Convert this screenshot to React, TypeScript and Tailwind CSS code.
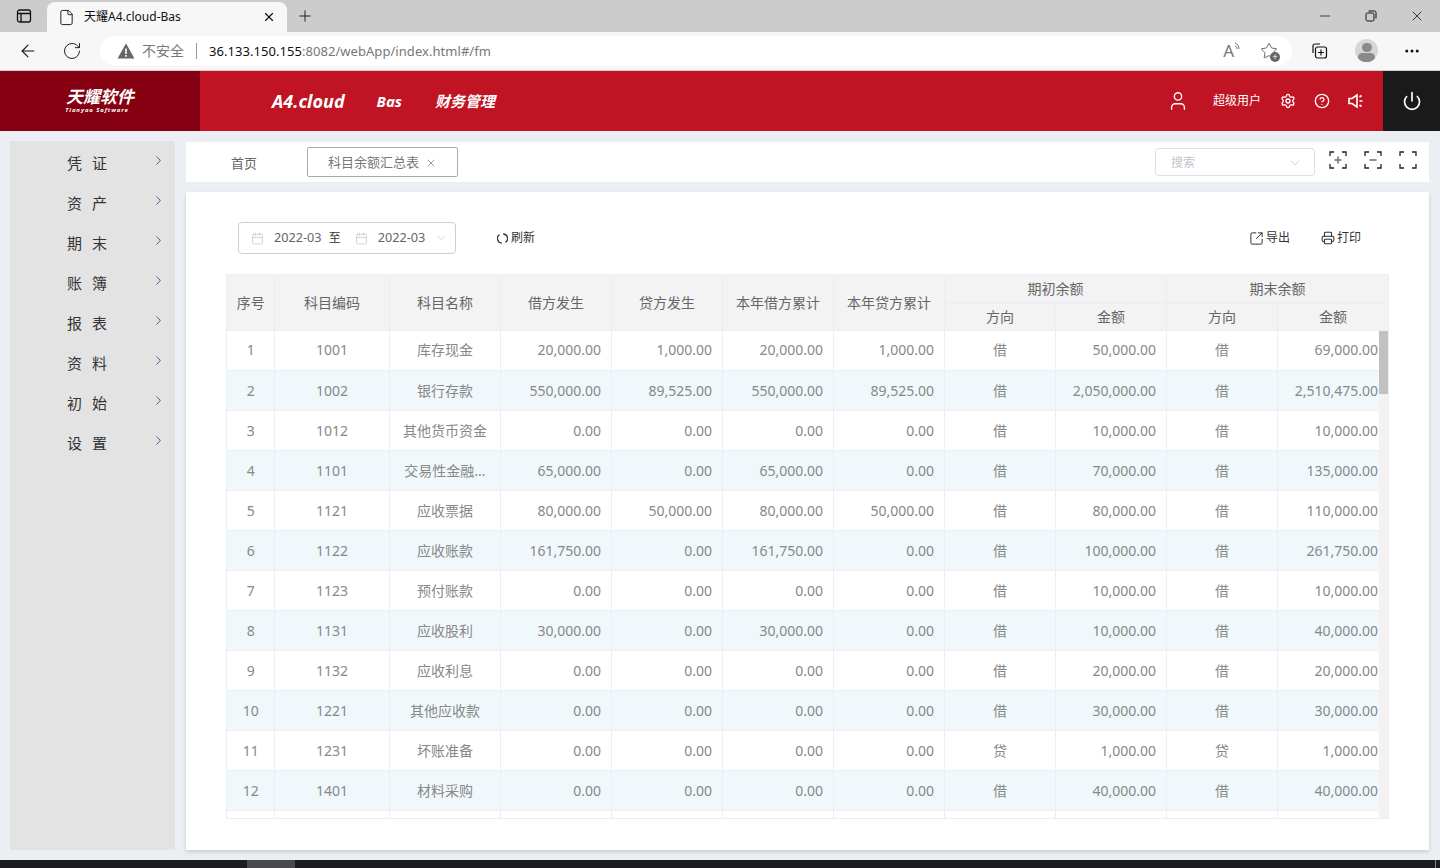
import React from 'react';
import {
  ArrowLeft, RotateCw, X, Plus, Minus, File, ChevronRight, ChevronDown, User, Settings,
  CircleHelp, Power, Calendar, SquareArrowOutUpRight, Printer, MoreHorizontal, Star,
} from 'lucide-react';

interface BalanceRow {
  no: number;
  code: string;
  name: string;
  debit: string;
  credit: string;
  yearDebit: string;
  yearCredit: string;
  openDir: string;
  open: string;
  closeDir: string;
  close: string;
}

const menus = ['凭证', '资产', '期末', '账簿', '报表', '资料', '初始', '设置'];

const row = (
  no: number, code: string, name: string, debit: string, credit: string,
  openDir: string, open: string, close: string,
): BalanceRow => ({
  no, code, name, debit, credit, yearDebit: debit, yearCredit: credit, openDir, open, closeDir: openDir, close,
});

const rows: BalanceRow[] = [
  row(1, '1001', '库存现金', '20,000.00', '1,000.00', '借', '50,000.00', '69,000.00'),
  row(2, '1002', '银行存款', '550,000.00', '89,525.00', '借', '2,050,000.00', '2,510,475.00'),
  row(3, '1012', '其他货币资金', '0.00', '0.00', '借', '10,000.00', '10,000.00'),
  row(4, '1101', '交易性金融...', '65,000.00', '0.00', '借', '70,000.00', '135,000.00'),
  row(5, '1121', '应收票据', '80,000.00', '50,000.00', '借', '80,000.00', '110,000.00'),
  row(6, '1122', '应收账款', '161,750.00', '0.00', '借', '100,000.00', '261,750.00'),
  row(7, '1123', '预付账款', '0.00', '0.00', '借', '10,000.00', '10,000.00'),
  row(8, '1131', '应收股利', '30,000.00', '0.00', '借', '10,000.00', '40,000.00'),
  row(9, '1132', '应收利息', '0.00', '0.00', '借', '20,000.00', '20,000.00'),
  row(10, '1221', '其他应收款', '0.00', '0.00', '借', '30,000.00', '30,000.00'),
  row(11, '1231', '坏账准备', '0.00', '0.00', '贷', '1,000.00', '1,000.00'),
  row(12, '1401', '材料采购', '0.00', '0.00', '借', '40,000.00', '40,000.00'),
];

const widths = [47, 115, 111, 111, 111, 111, 111, 111, 111, 111];

const Bracket = ({ mark }: { mark?: 'plus' | 'minus' }) => (
  <svg width="18" height="18" viewBox="0 0 18 18" fill="none" stroke="#222" strokeWidth="1.3">
    <path d="M1 5V1h4M13 1h4v4M17 13v4h-4M5 17H1v-4" />
    {mark && <path d="M5.5 9h7" stroke="#777" strokeWidth="1.6" />}
    {mark === 'plus' && <path d="M9 5.5v7" stroke="#777" strokeWidth="1.6" />}
  </svg>
);

const Th = ({ children, rowSpan, colSpan }: { children: React.ReactNode; rowSpan?: number; colSpan?: number }) => (
  <th rowSpan={rowSpan} colSpan={colSpan} className="border-r border-b border-[#ebeef5] bg-[#f3f3f3] text-center font-normal text-[14px] text-[#666] p-0 pl-[1px]">
    {children}
  </th>
);

const Td = ({ children, right, last }: { children?: React.ReactNode; right?: boolean; last?: boolean }) => (
  <td className={`h-[40px] border-b border-[#ebeef5] p-0 pb-[1px] text-[14px] text-[#888] whitespace-nowrap ${last ? '' : 'border-r'} ${right ? (last ? 'text-right pr-[1px]' : 'text-right pr-[9.5px]') : 'text-center pl-[1px]'}`}>
    {children}
  </td>
);

const BrowserChrome = () => (
  <div className="shrink-0">
    <div className="h-[32px] bg-[#cccccc] flex items-end text-[#111]">
      <div className="w-[47px] h-[32px] flex items-center justify-center">
        <svg width="16" height="16" viewBox="0 0 16 16" fill="none" stroke="#111" strokeWidth="1.3">
          <rect x="1.5" y="2" width="13" height="12" rx="2" />
          <path d="M1.5 5.5h13M5 5.5V14" />
        </svg>
      </div>
      <div className="w-[240px] h-[30px] bg-[#f7f7f7] rounded-t-lg flex items-center pl-[11px] pr-[11px]">
        <File size={17} strokeWidth={1.3} />
        <span className="ml-[9px] text-[12px] flex-1">天耀A4.cloud-Bas</span>
        <X size={14} />
      </div>
      <div className="h-[32px] ml-[9px] flex items-center">
        <Plus size={18} strokeWidth={1.2} />
      </div>
      <div className="ml-auto h-[32px] flex items-center">
        <Minus size={16} strokeWidth={1.1} className="mr-[32px]" />
        <svg width="12" height="12" viewBox="0 0 12 12" fill="none" stroke="#111" className="mr-[32px]">
          <rect x="1" y="3" width="8" height="8" rx="1.5" />
          <path d="M3.5 1h6a1.5 1.5 0 0 1 1.5 1.5v6" />
        </svg>
        <X size={16} strokeWidth={1.2} className="mr-[15px]" />
      </div>
    </div>
    <div className="h-[39px] bg-[#f7f7f7] border-b border-[#d0d0d0] flex items-center pb-[1px]">
      <ArrowLeft size={20} strokeWidth={1.3} className="ml-[18px] text-[#111]" />
      <RotateCw size={20} strokeWidth={1.2} className="ml-[24px] text-[#222]" />
      <div className="ml-[18px] w-[1192px] h-[30px] bg-white rounded-full flex items-center">
        <svg width="18" height="16" viewBox="0 0 18 16" className="ml-[17px]">
          <path d="M9 .5 17.5 15.5H.5z" fill="#666" />
          <path d="M8.2 5.5h1.6v5.5H8.2zM8.2 12h1.6v1.7H8.2z" fill="#fff" />
        </svg>
        <span className="ml-[7px] text-[14px] text-[#777]">不安全</span>
        <span className="ml-[12px] w-px h-[16px] bg-[#999]" />
        <span className="ml-[12px] pt-[2px] text-[13px] tracking-[0.05px] text-[#777] flex-1">
          <span className="text-[#111]">36.133.150.155</span>:8082/webApp/index.html#/fm
        </span>
        <span className="text-[17px] text-[#777]">A</span>
        <svg width="8" height="12" viewBox="0 0 8 12" fill="none" stroke="#777" strokeWidth="1" className="mr-[18px] -mt-[6px]">
          <path d="M1 1c2.500 1 4 3 4 6M1 4c1.500.5 2 1.500 2 3" />
        </svg>
        <div className="relative mr-[14px] text-[#555]">
          <Star size={18} strokeWidth={1.2} />
          <span className="absolute -right-[2px] -bottom-[2px] w-[10px] h-[10px] rounded-full bg-[#666] text-white text-[9px] leading-[10px] text-center">+</span>
        </div>
      </div>
      <svg width="18" height="18" viewBox="0 0 18 18" fill="none" stroke="#111" strokeWidth="1.2" className="ml-[18px]">
        <path d="M3 11V4a2 2 0 0 1 2-2h5" />
        <rect x="5.500" y="5" width="11" height="11" rx="2" />
        <path d="M11 7.500v6M8 10.500h6" />
      </svg>
      <div className="ml-[27px] w-[23px] h-[23px] rounded-full bg-[#d6d6d6] overflow-hidden flex flex-col items-center">
        <span className="mt-[4px] w-[10px] h-[10px] rounded-full bg-[#8a8a8a]" />
        <span className="mt-[1px] w-[17px] h-[10px] rounded-full bg-[#8a8a8a]" />
      </div>
      <MoreHorizontal size={18} strokeWidth={2} className="ml-[25px] text-[#111]" />
    </div>
  </div>
);

const AppHeader = () => (
  <div className="h-[60px] shrink-0 bg-[#c01323] flex items-center text-white">
    <div className="w-[200px] h-full bg-[#850010] flex flex-col items-center pt-[17px] pr-[0px]">
      <span className="text-[17px] leading-[18px] font-bold italic">天耀软件</span>
      <span className="mt-[1px] text-[6px] leading-[6px] italic font-bold tracking-[0.9px] -ml-[6px]">Tianyao Software</span>
    </div>
    <span className="ml-[72px] text-[18px] font-bold italic">A4.cloud</span>
    <span className="ml-[32px] text-[15px] font-bold italic">Bas</span>
    <span className="ml-[33px] text-[15px] font-bold italic">财务管理</span>
    <User size={22} strokeWidth={1.5} className="ml-auto" />
    <span className="ml-[24px] text-[12px]">超级用户</span>
    <Settings size={16} strokeWidth={2} className="ml-[19px]" />
    <CircleHelp size={16} strokeWidth={2} className="ml-[18px]" />
    <svg width="16" height="16" viewBox="0 0 16 16" fill="none" stroke="#fff" strokeWidth="1.6" className="ml-[18px] mr-[19px]">
      <path d="M1 5.500h3L9 2v12l-5-3.500H1zM11.500 4l2-1.500M11.500 8h3M11.500 12l2 1.500" />
    </svg>
    <div className="w-[57px] h-full bg-[#1a1a1a] flex items-center justify-center">
      <Power size={20} strokeWidth={2} />
    </div>
  </div>
);

const Sidebar = () => (
  <div className="w-[165px] ml-[10px] mt-[10px] mb-[10px] bg-[#e3e3e3] pt-[2px] shrink-0">
    {menus.map((m) => (
      <div key={m} className="h-[40px] flex items-center relative pl-[57px] text-[15px] text-[#333]">
        <span className="tracking-[10px]">{m}</span>
        <ChevronRight size={15} strokeWidth={1.4} className="absolute left-[141px] top-[10px] text-[#2f4f80]" />
      </div>
    ))}
  </div>
);

const TabsBar = () => (
  <div className="h-[40px] mt-[11px] bg-white flex items-center shrink-0">
    <span className="ml-[45px] pt-[3px] text-[13px] text-[#666]">首页</span>
    <div className="ml-[50px] w-[151px] h-[30px] pt-[2px] border border-[#aaa] rounded-[2px] flex items-center pl-[20px] text-[13px] text-[#777]">
      科目余额汇总表
      <X size={12} strokeWidth={1.4} className="ml-[6px] text-[#5a7a9a]" />
    </div>
    <div className="ml-auto w-[160px] h-[28px] pt-[1px] border border-[#dcdfe6] rounded-[4px] flex items-center px-[15px] text-[12px] text-[#c0c4cc]">
      <span className="flex-1">搜索</span>
      <ChevronDown size={16} strokeWidth={1.1} className="-mr-[4px]" />
    </div>
    <div className="flex items-center gap-[17px] ml-[14px] mr-[12px] -translate-y-[2px]">
      <Bracket mark="plus" />
      <Bracket mark="minus" />
      <Bracket />
    </div>
  </div>
);

const Toolbar = () => (
  <div className="flex items-center h-[32px] mt-[30px] ml-[52px] text-[12px] text-[#333]">
    <div className="w-[218px] h-[32px] border border-[#cfcfcf] rounded-[4px] flex items-center text-[12.7px] text-[#666]">
      <Calendar size={13} strokeWidth={1.1} className="ml-[12px] text-[#b0b8c8]" />
      <span className="ml-[10px]">2022-03</span>
      <span className="ml-[7px] text-[12px] text-[#333]">至</span>
      <Calendar size={13} strokeWidth={1.1} className="ml-[14px] text-[#b0b8c8]" />
      <span className="ml-[10px]">2022-03</span>
      <ChevronDown size={14} strokeWidth={1.1} className="ml-[9px] text-[#c0c4cc]" />
    </div>
    <svg width="11" height="11" viewBox="0 0 11 11" fill="none" stroke="#333" strokeWidth="1.3" className="ml-[41px]">
      <path d="M6.200 1A4.500 4.500 0 0 1 8.500 9.300M4.800 10A4.500 4.500 0 0 1 2.500 1.700" />
    </svg>
    <span className="ml-[3px]">刷新</span>
    <SquareArrowOutUpRight size={15} strokeWidth={1.6} className="ml-auto" />
    <span className="ml-[2px]">导出</span>
    <Printer size={14} strokeWidth={1.8} className="ml-[31px]" />
    <span className="ml-[2px] mr-[68px]">打印</span>
  </div>
);

const BalanceTable = () => (
  <div className="ml-[40px] mt-[20px] w-[1163px] h-[545px] border border-[#ebeef5] overflow-hidden">
    <table className="table-fixed border-collapse w-[1161px]">
      <colgroup>
        {widths.map((w, i) => <col key={i} className={w === 47 ? 'w-[47px]' : w === 115 ? 'w-[115px]' : 'w-[111px]'} />)}
        <col className="w-[111px]" />
      </colgroup>
      <thead>
        <tr className="h-[28px]">
          <Th rowSpan={2}>序号</Th>
          <Th rowSpan={2}>科目编码</Th>
          <Th rowSpan={2}>科目名称</Th>
          <Th rowSpan={2}>借方发生</Th>
          <Th rowSpan={2}>贷方发生</Th>
          <Th rowSpan={2}>本年借方累计</Th>
          <Th rowSpan={2}>本年贷方累计</Th>
          <Th colSpan={2}>期初余额</Th>
          <Th colSpan={2}>期末余额</Th>
        </tr>
        <tr className="h-[27px]">
          <Th>方向</Th>
          <Th>金额</Th>
          <Th>方向</Th>
          <Th>金额</Th>
        </tr>
      </thead>
    </table>
    <div className="flex">
      <table className="table-fixed border-collapse w-[1152px] shrink-0">
        <colgroup>
          {widths.map((w, i) => <col key={i} className={w === 47 ? 'w-[47px]' : w === 115 ? 'w-[115px]' : 'w-[111px]'} />)}
          <col className="w-[102px]" />
        </colgroup>
        <tbody>
          {rows.map((r) => (
            <tr key={r.no} className={r.no % 2 === 0 ? 'bg-[#f1f8fc]' : 'bg-white'}>
              <Td>{r.no}</Td>
              <Td>{r.code}</Td>
              <Td>{r.name}</Td>
              <Td right>{r.debit}</Td>
              <Td right>{r.credit}</Td>
              <Td right>{r.yearDebit}</Td>
              <Td right>{r.yearCredit}</Td>
              <Td>{r.openDir}</Td>
              <Td right>{r.open}</Td>
              <Td>{r.closeDir}</Td>
              <Td right last>{r.close}</Td>
            </tr>
          ))}
          <tr>
            {Array.from({ length: 11 }).map((_, i) => <Td key={i} last={i === 10} />)}
          </tr>
        </tbody>
      </table>
      <div className="w-[9px] h-[488px] bg-[#f3f1f1] shrink-0">
        <div className="h-[63px] bg-[#c1c1c1]" />
      </div>
    </div>
  </div>
);

export default function App() {
  return (
    <div className="w-[1440px] h-[868px] overflow-hidden flex flex-col bg-[#ebeef3] font-['Noto_Sans','Noto_Sans_CJK_SC',sans-serif]">
      <BrowserChrome />
      <AppHeader />
      <div className="flex-1 flex min-h-0">
        <Sidebar />
        <div className="flex-1 flex flex-col ml-[11px] mr-[11px] min-w-0">
          <TabsBar />
          <div className="mt-[10px] mb-[10px] flex-1 bg-white shadow-[0_2px_4px_rgba(0,0,0,0.15)] overflow-hidden">
            <Toolbar />
            <BalanceTable />
          </div>
        </div>
      </div>
      <div className="h-[8px] shrink-0 bg-[#1c1c20] flex overflow-hidden relative">
        <div className="ml-[247px] w-[48px] bg-[#4a4a4e]" />
        <span className="ml-auto mr-[27px] text-[12px] leading-[14px] mt-[6px] text-white">15:50</span>
        <span className="absolute right-[4px] top-0 w-px h-full bg-[#888]" />
      </div>
    </div>
  );
}
